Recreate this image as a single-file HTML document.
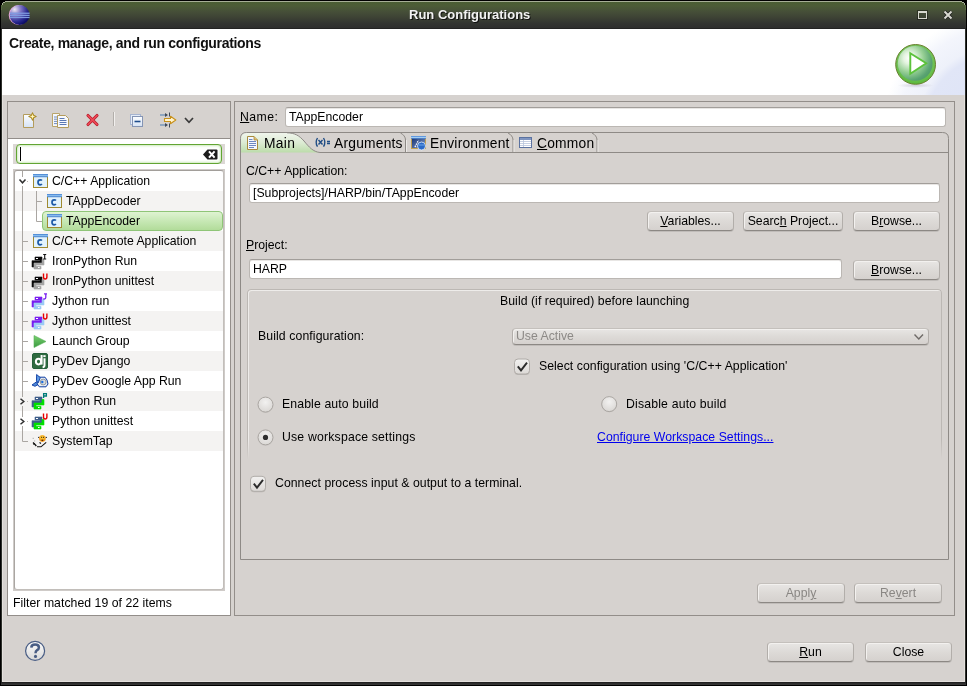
<!DOCTYPE html>
<html><head><meta charset="utf-8">
<style>
*{margin:0;padding:0;box-sizing:border-box}
html,body{width:967px;height:686px;overflow:hidden;background:#000;font-family:"Liberation Sans",sans-serif;font-size:12.25px;color:#000}
.a{position:absolute}
.t{position:absolute;white-space:nowrap;line-height:14px}
svg{position:absolute;overflow:visible}
#title{left:1px;top:1px;width:965px;height:28px;background:linear-gradient(#a6ae96 0px,#a6ae96 1px,#4a5e33 1px,#4c5c37 5px,#454e38 11px,#3c4134 17px,#333531 22px,#2e2e2e 27px,#232323 27px)}
#content{left:2px;top:29px;width:963px;height:653px;background:#d6d2cf;border-left:1px solid #e4e0dd;border-right:1px solid #e4e0dd;border-bottom:1px solid #e4e0dd}
#header{left:2px;top:29px;width:963px;height:66px;background:#fff;overflow:hidden}
#bottom{left:1px;top:682px;width:965px;height:3px;background:linear-gradient(#222 1px,#2e2e2e 1px,#2e2e2e 2px,#353535 2px)}
#sideL{left:1px;top:29px;width:1px;height:653px;background:#2e302b}
#sideR{left:965px;top:29px;width:1px;height:653px;background:#2e302b}
.panel{position:absolute;border:1px solid #938e8a;background:#d6d2cf}
.field{position:absolute;background:#fff;border:1px solid #bbb7b3;border-top-color:#a29e9a;border-radius:3px;box-shadow:inset 0 1px 0 #e8e6e4}
.btn{position:absolute;border:1px solid #b2aeaa;border-top-color:#c4c0bc;border-bottom-color:#8c8884;border-radius:4px;background:linear-gradient(#e8e6e4,#dddad7 50%,#d5d1ce);box-shadow:inset 1px 1px 0 #f3f1ef,0 1px 0 rgba(0,0,0,.10);text-align:center;line-height:18px;height:20px}
.row{position:absolute;left:15px;width:209px;height:20px}
.alt{background:#f3f2f1}
.tl{position:absolute;background:#aaa6a2}
</style></head><body><div id="root" style="position:absolute;left:0;top:0;width:967px;height:686px;will-change:transform">
<div id="title" class="a"></div>
<svg style="left:0;top:0" width="967" height="10" shape-rendering="crispEdges">
<rect x="1" y="1" width="4" height="1" fill="#000"/><rect x="1" y="2" width="2" height="1" fill="#000"/><rect x="1" y="3" width="1" height="2" fill="#000"/>
<rect x="3" y="2" width="2" height="1" fill="#a6ae96"/><rect x="2" y="3" width="1" height="2" fill="#a6ae96"/>
<rect x="962" y="1" width="4" height="1" fill="#000"/><rect x="964" y="2" width="2" height="1" fill="#000"/><rect x="965" y="3" width="1" height="2" fill="#000"/>
<rect x="962" y="2" width="2" height="1" fill="#a6ae96"/><rect x="964" y="3" width="1" height="2" fill="#a6ae96"/>
<rect x="1" y="5" width="1" height="5" fill="#566a41"/><rect x="965" y="5" width="1" height="5" fill="#566a41"/>
</svg>
<div class="t" style="left:410px;top:9px;font-weight:bold;font-size:13px;color:#111;">Run Configurations</div>
<div class="t" style="left:409px;top:8px;font-weight:bold;font-size:13px;color:#f2f2f2;">Run Configurations</div>
<!-- eclipse icon -->
<svg style="left:8px;top:4px" width="23" height="23" viewBox="0 0 23 23">
<defs><radialGradient id="eg" cx="0.25" cy="0.22" r="0.9"><stop offset="0" stop-color="#ece6f4"/><stop offset="0.35" stop-color="#7f76c4"/><stop offset="0.7" stop-color="#2a2a90"/><stop offset="1" stop-color="#02025a"/></radialGradient></defs>
<circle cx="10.7" cy="11" r="10" fill="#e9a9d8"/>
<circle cx="11.6" cy="11" r="9.9" fill="url(#eg)"/>
<rect x="2" y="8.6" width="19.6" height="1.3" fill="#7f9ae0"/>
<rect x="2" y="10.7" width="19.6" height="1.3" fill="#7f9ae0"/>
<rect x="2" y="12.8" width="19.6" height="1.3" fill="#7f9ae0"/>
</svg>
<!-- window buttons -->
<div class="a" style="left:918px;top:11px;width:9px;height:8px;border:1px solid #d8d8d0;border-top-width:2px;box-shadow:0 0 0 1px rgba(0,0,0,.35)"></div>
<svg style="left:942px;top:9px" width="12" height="12" viewBox="0 0 12 12"><path d="M2.5 2.5L9.5 9.5M9.5 2.5L2.5 9.5" stroke="#1e1e1e" stroke-width="3.4"/><path d="M2.5 2.5L9.5 9.5M9.5 2.5L2.5 9.5" stroke="#d8d8d0" stroke-width="2"/></svg>

<div id="content" class="a"></div>
<div id="header" class="a"><div class="a" style="left:0;top:0;width:963px;height:66px;background:radial-gradient(circle 140px at 998px 101px, #dce2f6 0px, #e1e6f7 76px, #eef1fa 84px, #f3f5fc 102px, #fbfcfe 112px, #fff 118px)"></div></div>
<svg style="left:890px;top:40px" width="52" height="52" viewBox="0 0 52 52">
<defs>
<radialGradient id="pr" cx="0.5" cy="0.4" r="0.6"><stop offset="0" stop-color="#8fd080"/><stop offset="0.8" stop-color="#6cc050"/><stop offset="1" stop-color="#58b838"/></radialGradient>
<radialGradient id="pg" cx="0.33" cy="0.35" r="0.75"><stop offset="0" stop-color="#ffffff"/><stop offset="0.22" stop-color="#e4f4e0"/><stop offset="0.55" stop-color="#96cf94"/><stop offset="0.85" stop-color="#5aa472"/><stop offset="1" stop-color="#4f9a68"/></radialGradient>
<radialGradient id="ps" cx="0.5" cy="0.5" r="0.5"><stop offset="0" stop-color="#605070" stop-opacity="0.22"/><stop offset="1" stop-color="#605070" stop-opacity="0"/></radialGradient>
</defs>
<ellipse cx="25.6" cy="45.5" rx="18" ry="2.4" fill="url(#ps)"/>
<circle cx="25.6" cy="24.4" r="19.9" fill="url(#pr)" stroke="#6a7f30" stroke-width="1"/>
<circle cx="25.2" cy="23.4" r="17.4" fill="url(#pg)"/>
<path d="M20.3 13.2 L36.2 23.3 L20.3 33.8 Z" fill="#fff" stroke="#5cc23c" stroke-width="1.9" stroke-linejoin="miter"/>
</svg>
<div class="t" style="left:9px;top:36px;font-weight:bold;font-size:14px;letter-spacing:-0.33px;color:#111">Create, manage, and run configurations</div>
<div id="bottom" class="a"></div><div id="sideL" class="a"></div><div id="sideR" class="a"></div>

<!-- LEFT PANEL -->
<div class="panel" style="left:7px;top:101px;width:224px;height:515px;"></div>
<div class="a" style="left:8px;top:138px;width:222px;height:477px;background:#fff;border-top:1px solid #938e8a"></div>
<svg style="left:0;top:0" width="967" height="686">
<defs>
<linearGradient id="pgw" x1="0" y1="0" x2="0" y2="1"><stop offset="0" stop-color="#fdfeff"/><stop offset="1" stop-color="#d6e3f5"/></linearGradient>
</defs>
<!-- new -->
<path d="M23.5 114.5H30.5L33.5 117.5V127.5H23.5Z" fill="url(#pgw)" stroke="#b49c5c"/>
<path d="M32.5 112.6L33.7 115.3L36.4 116.5L33.7 117.7L32.5 120.4L31.3 117.7L28.6 116.5L31.3 115.3Z" fill="#d8b838" stroke="#9a7818" stroke-width="0.8" stroke-linejoin="round"/>
<path d="M32.5 114.6V118.4M30.6 116.5H34.4" stroke="#fff6c8" stroke-width="0.9"/>
<!-- duplicate -->
<path d="M52.5 113.5H59.5V126.5H52.5Z" fill="#f4f7fc" stroke="#b9a46a"/>
<path d="M57.5 115.5H65.5L68.5 118.5V127.5H57.5Z" fill="#f7f9fd" stroke="#b49c5c"/>
<path d="M54 117H57M54 119.2H57M54 121.4H57M54 123.6H57" stroke="#6f8cc0" stroke-width="1"/>
<path d="M59.5 118.5H64.5M59.5 120.5H66.5M59.5 122.5H66.5M59.5 124.5H66.5" stroke="#5a78b4" stroke-width="1"/>
<!-- delete -->
<path d="M88 115.5L97 124.5M97 115.5L88 124.5" stroke="#b81c2a" stroke-width="3.1" stroke-linecap="round"/>
<path d="M88 115.5L97 124.5M97 115.5L88 124.5" stroke="#ee4a58" stroke-width="1.7" stroke-linecap="round"/>
<!-- separator -->
<path d="M113.5 112V126" stroke="#b2aeaa"/><path d="M114.5 112V126" stroke="#f2f0ee"/>
<!-- collapse -->
<rect x="130.5" y="114.5" width="10" height="10" fill="#e4ecf8" stroke="#a6b4d0"/>
<rect x="132.5" y="116.5" width="10" height="10" fill="url(#pgw)" stroke="#8494b4"/>
<path d="M134.5 121.5H140.5" stroke="#1d4c8c" stroke-width="1.6"/>
<!-- filter -->
<path d="M160 115H166M160 125H166" stroke="#4a7ab0" stroke-width="1"/>
<path d="M165 113L168 115L165 117ZM165 123L168 125L165 127Z" fill="#404a58"/>
<path d="M169.5 112.5V116.5M169.5 123.5V127.5" stroke="#404a58" stroke-width="1"/>
<path d="M164.5 118.5H170.5V116.3L175.8 120L170.5 123.7V121.5H164.5Z" fill="#fff4d0" stroke="#c89018" stroke-width="1.1" stroke-linejoin="round"/>
<!-- chevron -->
<path d="M185 118L189 122.3L193 118" fill="none" stroke="#3a3a3a" stroke-width="1.7"/>
</svg>

<div class="a" style="left:13px;top:144px;width:212px;height:20px;background:#dcd8d5"></div>
<div class="a" style="left:16px;top:144px;width:206px;height:20px;background:#fff;border:1.6px solid #62a533;border-radius:4px;box-shadow:inset 0 0 2.5px 0.5px #b8e0a0"></div>
<div class="a" style="left:20px;top:147px;width:1px;height:14px;background:#000"></div>
<svg style="left:0;top:0" width="967" height="686"><path d="M203 154.5L207.5 149.5H216.5Q217.5 149.5 217.5 150.5V158.5Q217.5 159.5 216.5 159.5H207.5Z" fill="#1c1c1c"/><path d="M209 151.3L214.6 157.7M214.6 151.3L209 157.7" stroke="#fff" stroke-width="2"/></svg>
<div class="a" style="left:13px;top:169px;width:212px;height:422px;background:#cfcbc8"></div>
<div class="a" style="left:14px;top:170px;width:210px;height:420px;background:#fff;border-radius:3px;border:1px solid #c2beba;border-top-color:#a29e9a;border-left-color:#aaa6a2"></div>
<div class="t" style="left:52px;top:174px">C/C++ Application</div>
<div class="a" style="left:15px;top:191px;width:208px;height:20px;background:#f4f3f2"></div>
<div class="t" style="left:66px;top:194px">TAppDecoder</div>
<div class="a" style="left:42px;top:211px;width:181px;height:20px;border:1px solid #8fc578;border-radius:4px;background:linear-gradient(#dff3d2,#c7e8b5 50%,#b2dc9a)"></div>
<div class="t" style="left:66px;top:214px">TAppEncoder</div>
<div class="a" style="left:15px;top:231px;width:208px;height:20px;background:#f4f3f2"></div>
<div class="t" style="left:52px;top:234px">C/C++ Remote Application</div>
<div class="t" style="left:52px;top:254px">IronPython Run</div>
<div class="a" style="left:15px;top:271px;width:208px;height:20px;background:#f4f3f2"></div>
<div class="t" style="left:52px;top:274px">IronPython unittest</div>
<div class="t" style="left:52px;top:294px">Jython run</div>
<div class="a" style="left:15px;top:311px;width:208px;height:20px;background:#f4f3f2"></div>
<div class="t" style="left:52px;top:314px">Jython unittest</div>
<div class="t" style="left:52px;top:334px">Launch Group</div>
<div class="a" style="left:15px;top:351px;width:208px;height:20px;background:#f4f3f2"></div>
<div class="t" style="left:52px;top:354px">PyDev Django</div>
<div class="t" style="left:52px;top:374px">PyDev Google App Run</div>
<div class="a" style="left:15px;top:391px;width:208px;height:20px;background:#f4f3f2"></div>
<div class="t" style="left:52px;top:394px">Python Run</div>
<div class="t" style="left:52px;top:414px">Python unittest</div>
<div class="a" style="left:15px;top:431px;width:208px;height:20px;background:#f4f3f2"></div>
<div class="t" style="left:52px;top:434px">SystemTap</div>
<svg style="left:0;top:0" width="967" height="686">
<defs><linearGradient id="cbar" x1="0" y1="0" x2="0" y2="1"><stop offset="0" stop-color="#3c7acc"/><stop offset="0.5" stop-color="#8cc0f0"/><stop offset="1" stop-color="#3a72c0"/></linearGradient><linearGradient id="lg" x1="0" y1="0" x2="0" y2="1"><stop offset="0" stop-color="#7ad070"/><stop offset="1" stop-color="#3a9a40"/></linearGradient></defs>
<path d="M22.5 171V177M22.5 186V397M22.5 406V417M22.5 426V441.5H28" stroke="#aaa6a2" fill="none"/>
<path d="M23 241.5H28" stroke="#aaa6a2"/>
<path d="M23 261.5H28" stroke="#aaa6a2"/>
<path d="M23 281.5H28" stroke="#aaa6a2"/>
<path d="M23 301.5H28" stroke="#aaa6a2"/>
<path d="M23 321.5H28" stroke="#aaa6a2"/>
<path d="M23 341.5H28" stroke="#aaa6a2"/>
<path d="M23 361.5H28" stroke="#aaa6a2"/>
<path d="M23 381.5H28" stroke="#aaa6a2"/>
<path d="M36.5 191V221.5H42M37 201.5H42" stroke="#aaa6a2" fill="none"/>
<rect x="27" y="181.0" width="1" height="1" fill="#b8b4b0"/>
<rect x="27" y="401.0" width="1" height="1" fill="#b8b4b0"/>
<rect x="27" y="421.0" width="1" height="1" fill="#b8b4b0"/>
<path d="M19.5 179.5L22.5 182.8L25.5 179.5" fill="none" stroke="#303030" stroke-width="1.5"/>
<path d="M20.5 398.7L23.8 401.5L20.5 404.3" fill="none" stroke="#303030" stroke-width="1.5"/>
<path d="M20.5 418.7L23.8 421.5L20.5 424.3" fill="none" stroke="#303030" stroke-width="1.5"/>
<g transform="translate(33,174)"><rect x="0.5" y="0.5" width="14" height="13" fill="#e2f3fd" stroke="#a08a30"/><rect x="0" y="0" width="15" height="3.2" fill="url(#cbar)"/><path d="M8.9 6.6Q8.4 5.9 7.2 5.9Q5 5.9 5 8.3Q5 10.8 7.2 10.8Q8.4 10.8 8.9 10.1" fill="none" stroke="#1d5aa6" stroke-width="1.7"/></g>
<g transform="translate(47,194)"><rect x="0.5" y="0.5" width="14" height="13" fill="#e2f3fd" stroke="#a08a30"/><rect x="0" y="0" width="15" height="3.2" fill="url(#cbar)"/><path d="M8.9 6.6Q8.4 5.9 7.2 5.9Q5 5.9 5 8.3Q5 10.8 7.2 10.8Q8.4 10.8 8.9 10.1" fill="none" stroke="#1d5aa6" stroke-width="1.7"/></g>
<g transform="translate(47,214)"><rect x="0.5" y="0.5" width="14" height="13" fill="#e2f3fd" stroke="#a08a30"/><rect x="0" y="0" width="15" height="3.2" fill="url(#cbar)"/><path d="M8.9 6.6Q8.4 5.9 7.2 5.9Q5 5.9 5 8.3Q5 10.8 7.2 10.8Q8.4 10.8 8.9 10.1" fill="none" stroke="#1d5aa6" stroke-width="1.7"/></g>
<g transform="translate(33,234)"><rect x="0.5" y="0.5" width="14" height="13" fill="#e2f3fd" stroke="#a08a30"/><rect x="0" y="0" width="15" height="3.2" fill="url(#cbar)"/><path d="M8.9 6.6Q8.4 5.9 7.2 5.9Q5 5.9 5 8.3Q5 10.8 7.2 10.8Q8.4 10.8 8.9 10.1" fill="none" stroke="#1d5aa6" stroke-width="1.7"/></g>
<g transform="translate(31,251)"><path d="M4 6H11V12.4H3V16H1V9.7H9V9H4Z" fill="#0a0a0a" stroke="#0a0a0a" stroke-width="0.6" stroke-linejoin="round"/><rect x="5" y="7" width="2" height="1" fill="#fff"/><path d="M11 8.5H13V14H5V15.3H10V18H3V12H11Z" fill="#a4a4a4" stroke="#a4a4a4" stroke-width="0.6" stroke-linejoin="round"/><rect x="7" y="16" width="1.6" height="1" fill="#fff"/><path d="M12.2 3.5H15.2M13.7 3.5V8M12.2 8H15.2" stroke="#111" stroke-width="1.1"/></g>
<g transform="translate(31,271)"><path d="M4 6H11V12.4H3V16H1V9.7H9V9H4Z" fill="#0a0a0a" stroke="#0a0a0a" stroke-width="0.6" stroke-linejoin="round"/><rect x="5" y="7" width="2" height="1" fill="#fff"/><path d="M11 8.5H13V14H5V15.3H10V18H3V12H11Z" fill="#a4a4a4" stroke="#a4a4a4" stroke-width="0.6" stroke-linejoin="round"/><rect x="7" y="16" width="1.6" height="1" fill="#fff"/><path d="M12.5 2.5V6Q12.5 8 14.2 8Q15.9 8 15.9 6V2.5" fill="none" stroke="#e80000" stroke-width="1.4"/></g>
<g transform="translate(31,291)"><path d="M4 6H11V12.4H3V16H1V9.7H9V9H4Z" fill="#7a20f0" stroke="#7a20f0" stroke-width="0.6" stroke-linejoin="round"/><rect x="5" y="7" width="2" height="1" fill="#fff"/><path d="M11 8.5H13V14H5V15.3H10V18H3V12H11Z" fill="#9ccaf6" stroke="#9ccaf6" stroke-width="0.6" stroke-linejoin="round"/><rect x="7" y="16" width="1.6" height="1" fill="#fff"/><path d="M13 2.8H16M14.8 2.8V6.5Q14.8 8 13.3 8H12.3" fill="none" stroke="#7a20f0" stroke-width="1.3"/></g>
<g transform="translate(31,311)"><path d="M4 6H11V12.4H3V16H1V9.7H9V9H4Z" fill="#7a20f0" stroke="#7a20f0" stroke-width="0.6" stroke-linejoin="round"/><rect x="5" y="7" width="2" height="1" fill="#fff"/><path d="M11 8.5H13V14H5V15.3H10V18H3V12H11Z" fill="#9ccaf6" stroke="#9ccaf6" stroke-width="0.6" stroke-linejoin="round"/><rect x="7" y="16" width="1.6" height="1" fill="#fff"/><path d="M12.5 2.5V6Q12.5 8 14.2 8Q15.9 8 15.9 6V2.5" fill="none" stroke="#e80000" stroke-width="1.4"/></g>
<g transform="translate(31,391)"><path d="M4 6H11V12.4H3V16H1V9.7H9V9H4Z" fill="#3f5f8a" stroke="#3f5f8a" stroke-width="0.6" stroke-linejoin="round"/><rect x="5" y="7" width="2" height="1" fill="#fff"/><path d="M11 8.5H13V14H5V15.3H10V18H3V12H11Z" fill="#00e000" stroke="#00e000" stroke-width="0.6" stroke-linejoin="round"/><rect x="7" y="16" width="1.6" height="1" fill="#fff"/><path d="M12.6 7V2.6H15.4V5H12.6" fill="none" stroke="#007a78" stroke-width="1.3"/></g>
<g transform="translate(31,411)"><path d="M4 6H11V12.4H3V16H1V9.7H9V9H4Z" fill="#3f5f8a" stroke="#3f5f8a" stroke-width="0.6" stroke-linejoin="round"/><rect x="5" y="7" width="2" height="1" fill="#fff"/><path d="M11 8.5H13V14H5V15.3H10V18H3V12H11Z" fill="#00e000" stroke="#00e000" stroke-width="0.6" stroke-linejoin="round"/><rect x="7" y="16" width="1.6" height="1" fill="#fff"/><path d="M12.5 2.5V6Q12.5 8 14.2 8Q15.9 8 15.9 6V2.5" fill="none" stroke="#e80000" stroke-width="1.4"/></g>
<path d="M34 335.5L46 341.5L34 347.5Z" fill="url(#lg)" stroke="#58b058" stroke-width="0.6"/>
<rect x="32.5" y="353.5" width="15" height="15" rx="1.5" fill="#2f6b40" stroke="#24603a"/>
<ellipse cx="38.5" cy="361.6" rx="2.6" ry="2.8" fill="none" stroke="#fff" stroke-width="2"/><path d="M41.6 355V364.6" stroke="#fff" stroke-width="2"/><rect x="43.3" y="355.2" width="2.3" height="1.9" fill="#fff"/><path d="M44.5 358.2V365.2Q44.5 367 42.6 367.2" fill="none" stroke="#fff" stroke-width="2"/>
<!-- gae -->
<path d="M32 385L36.5 381.8L40 383.5L35 386.3Z" fill="#4f8ad8" stroke="#0b3aa0" stroke-width="0.9" stroke-linejoin="round"/>
<path d="M37.2 377.2H45L47 380L48 384L46 386.8H39.3L37.2 384Z" fill="#eaf0f6" stroke="#0b3aa0" stroke-width="1" stroke-linejoin="round"/>
<path d="M36.6 374.5L40.3 377.6L38.2 382.8L36.5 380.8Z" fill="#5d9ae4" stroke="#0b3aa0" stroke-width="0.9" stroke-linejoin="round"/>
<circle cx="43.2" cy="382" r="2.9" fill="#d6dade" stroke="#8c9298" stroke-width="0.9"/>
<circle cx="42.3" cy="382" r="1.2" fill="#1a6ee0"/>
<!-- systemtap -->
<path d="M33 442.5L35.5 445L36.3 446" stroke="#111" stroke-width="1.3" fill="none"/>
<path d="M33.2 444.3L35 443.5" stroke="#111" stroke-width="1"/>
<path d="M37 446.8H41L46.2 442.3M39.5 442.5L41 443.5" stroke="#111" stroke-width="1.1" fill="none"/>
<path d="M33.2 437.8V439M34.2 441h1" stroke="#a0a0a0" stroke-width="0.9"/>
<path d="M38 437.4H39.5M45.5 437.4H47" stroke="#202838" stroke-width="1"/>
<circle cx="42.4" cy="438.6" r="3.3" fill="#f29a18"/>
<circle cx="42.3" cy="437.6" r="2.4" fill="#fbc030"/>
<path d="M41.2 437.3h0.9M43.1 437.3h0.9" stroke="#111" stroke-width="1"/>
<path d="M41.5 439.6h1.8v1.4h-1.8z" fill="#5a2000"/>


</svg>
<div class="t" style="letter-spacing:0.036px;left:13px;top:596px;">Filter matched 19 of 22 items</div>

<!-- RIGHT PANEL -->
<div class="panel" style="left:234px;top:101px;width:721px;height:515px;"></div>
<div class="t" style="left:240px;top:110px;letter-spacing:0.45px"><u>N</u>ame:</div>
<div class="field" style="left:285px;top:107px;width:661px;height:20px;"></div>
<div class="t" style="left:289px;top:110px;">TAppEncoder</div>

<!-- tab folder -->
<svg style="left:0;top:0" width="967" height="686">
<defs>
<linearGradient id="tg" x1="0" y1="0" x2="0" y2="1"><stop offset="0" stop-color="#f0f5ec"/><stop offset="0.5" stop-color="#dcebd3"/><stop offset="1" stop-color="#bcdcaa"/></linearGradient>
<linearGradient id="envbar" x1="0" y1="0" x2="0" y2="1"><stop offset="0" stop-color="#3a78d0"/><stop offset="0.5" stop-color="#a8d4f8"/><stop offset="1" stop-color="#3a70c0"/></linearGradient>
<linearGradient id="envbody" x1="0" y1="0" x2="1" y2="1"><stop offset="0" stop-color="#0a2a70"/><stop offset="1" stop-color="#8aa0c8"/></linearGradient>
</defs>
<path d="M240.5 559.5V138.5Q240.5 132.5 246.5 132.5H942.5Q948.5 132.5 948.5 138.5V559.5Z" fill="none" stroke="#8e8a86"/>
<path d="M241 152.5V139Q241 133 247 133H287C295 133 299 135.5 304 141C309 147 313 151.8 320 152.5H241Z" fill="url(#tg)"/>
<path d="M287 132.8C295 133 299 135.5 304 141C309 147 313 151.8 320 152.5H948" fill="none" stroke="#8e8a86"/>
<path d="M400.5 133C403.5 134.5 405.5 137 405.5 140V152" fill="none" stroke="#8e8a86"/>
<path d="M406.5 140V152" stroke="#eceae8"/>
<path d="M508 133C511 134.5 513 137 513 140V152" fill="none" stroke="#8e8a86"/>
<path d="M514 140V152" stroke="#eceae8"/>
<path d="M592 133C595 134.5 597 137 597 140V152" fill="none" stroke="#8e8a86"/>
<path d="M598 140V152" stroke="#eceae8"/>
<!-- main icon -->
<path d="M247.5 136.5H254L257.5 140V149.5H247.5Z" fill="#f4f7fd" stroke="#a88a3c"/>
<path d="M254 136.5V140H257.5" fill="#e0c070" stroke="#a88a3c" stroke-width="0.8"/>
<path d="M249 139.5H252.5M249 141.5H256M249 143.5H256M249 145.5H256M249 147.5H254" stroke="#6d88c0" stroke-width="1"/>
<!-- args icon -->
<g fill="none" stroke="#1f4c84" stroke-width="1.4">
<path d="M317.5 138Q314.8 142.3 317.5 146.6"/>
<path d="M323.5 138Q326.2 142.3 323.5 146.6"/>
<path d="M318.5 140L322.5 144.5M322.5 140L318.5 144.5"/>
<path d="M327 141.5H330M327 143.5H330"/>
</g>
<!-- env icon -->
<rect x="411.5" y="136.5" width="14" height="12" fill="url(#envbody)" stroke="#c0a050"/>
<rect x="411" y="136" width="15" height="2.8" fill="url(#envbar)"/>
<path d="M415 147L418.5 140" stroke="#fff" stroke-width="1.3" stroke-dasharray="1.5 1"/>
<circle cx="421.5" cy="146" r="4" fill="#2a6ac8" stroke="#e8f0fa" stroke-width="0.8"/>
<path d="M418.5 145H424.5" stroke="#6aa4e8" stroke-width="1"/>
<!-- common icon -->
<rect x="519.5" y="137.5" width="12" height="10" fill="#fff" stroke="#5b72a0"/>
<rect x="520" y="138" width="11" height="2" fill="#7f95c0"/>
<path d="M520 141.5H531M520 143.5H531M520 145.5H531" stroke="#b8c4dc" stroke-width="0.8"/>
<path d="M523.5 140V147" stroke="#b8c4dc" stroke-width="0.8"/>
</svg>
<div class="t" style="letter-spacing:0.3px;left:264px;top:137px;font-size:13.8px">Main</div>
<div class="t" style="letter-spacing:0.22px;left:334px;top:137px;font-size:13.8px">Arguments</div>
<div class="t" style="letter-spacing:0.2px;left:430px;top:137px;font-size:13.8px">Environment</div>
<div class="t" style="letter-spacing:0.22px;left:537px;top:137px;font-size:13.8px"><u>C</u>ommon</div>

<!--TABS-->


<div class="t" style="left:246px;top:164px;">C/C++ Application:</div>
<div class="field" style="left:249px;top:183px;width:691px;height:20px;"></div>
<div class="t" style="left:253px;top:186px;">[Subprojects]/HARP/bin/TAppEncoder</div>

<div class="btn" style="left:647px;top:211px;width:87px;"><u>V</u>ariables...</div>
<div class="btn" style="left:743px;top:211px;width:100px;">Searc<u>h</u> Project...</div>
<div class="btn" style="left:853px;top:211px;width:87px;">B<u>r</u>owse...</div>

<div class="t" style="left:246px;top:238px;"><u>P</u>roject:</div>
<div class="field" style="left:249px;top:259px;width:593px;height:20px;"></div>
<div class="t" style="left:253px;top:262px;">HARP</div>
<div class="btn" style="left:853px;top:260px;width:87px;"><u>B</u>rowse...</div>

<!-- group -->
<div class="a" style="left:247px;top:289px;width:695px;height:170px;border:1px solid #bcb8b4;border-bottom:none;border-radius:4px 4px 0 0;box-shadow:inset 1px 1px 0 #eeecea;-webkit-mask-image:linear-gradient(#000 150px,transparent 170px)"></div>
<div class="t" style="letter-spacing:0.057px;left:500px;top:294px;">Build (if required) before launching</div>
<div class="t" style="letter-spacing:0.105px;left:258px;top:329px;">Build configuration:</div>
<div class="a" style="left:512px;top:328px;width:417px;height:17px;border:1px solid #b2aeaa;border-top-color:#c4c0bc;border-bottom-color:#8c8884;border-radius:4px;background:linear-gradient(#e8e6e4,#dddad7 50%,#d5d1ce);box-shadow:inset 1px 1px 0 #f3f1ef,0 1px 0 rgba(0,0,0,.10)"></div>
<div class="t" style="left:516px;top:329px;color:#8d8a87">Use Active</div>
<svg style="left:0;top:0" width="967" height="686"><path d="M914.5 334.5L918.8 339L923 334.5" fill="none" stroke="#6f6b68" stroke-width="1.4"/></svg>
<div class="t" style="letter-spacing:0.044px;left:539px;top:359px;">Select configuration using 'C/C++ Application'</div>
<div class="t" style="letter-spacing:0.125px;left:282px;top:397px;">Enable auto build</div>
<div class="t" style="letter-spacing:0.190px;left:282px;top:430px;">Use workspace settings</div>
<div class="t" style="letter-spacing:0.176px;left:626px;top:397px;">Disable auto build</div>
<div class="t" style="letter-spacing:0.033px;left:597px;top:430px;color:#0000ee;text-decoration:underline">Configure Workspace Settings...</div>
<svg style="left:0;top:0" width="967" height="686">
<defs>
<linearGradient id="cbg" x1="0" y1="0" x2="0" y2="1"><stop offset="0" stop-color="#f2f1f0"/><stop offset="1" stop-color="#dcd9d6"/></linearGradient>
<radialGradient id="rbg" cx="0.5" cy="0.35" r="0.7"><stop offset="0" stop-color="#f2f1f0"/><stop offset="1" stop-color="#d8d5d2"/></radialGradient>
</defs>
<rect x="514.5" y="360" width="15" height="15" rx="3.5" fill="#8a8682" opacity="0.35"/>
<rect x="514.5" y="359" width="15" height="15" rx="3.5" fill="url(#cbg)" stroke="#b0aca8"/>
<path d="M517.8 366.3L521 370.4L527 362.6" fill="none" stroke="#2b2b2b" stroke-width="1.9"/>
<rect x="250.5" y="477.3" width="15" height="15" rx="3.5" fill="#8a8682" opacity="0.35"/>
<rect x="250.5" y="476.3" width="15" height="15" rx="3.5" fill="url(#cbg)" stroke="#b0aca8"/>
<path d="M253.8 483.6L257 487.7L263 479.9" fill="none" stroke="#2b2b2b" stroke-width="1.9"/>
<circle cx="265.5" cy="405.3" r="7.5" fill="#bdb9b5" opacity="0.6"/>
<circle cx="265.5" cy="404.6" r="7.5" fill="url(#rbg)" stroke="#aaa6a2"/>
<circle cx="265.5" cy="438.1" r="7.5" fill="#bdb9b5" opacity="0.6"/>
<circle cx="265.5" cy="437.4" r="7.5" fill="url(#rbg)" stroke="#aaa6a2"/>
<circle cx="265.5" cy="437.4" r="2.6" fill="#2e2e2e"/>
<circle cx="609.2" cy="404.8" r="7.5" fill="#bdb9b5" opacity="0.6"/>
<circle cx="609.2" cy="404.1" r="7.5" fill="url(#rbg)" stroke="#aaa6a2"/>
</svg>
<div class="t" style="letter-spacing:0.045px;left:275px;top:476px;">Connect process input &amp; output to a terminal.</div>

<div class="btn" style="left:757px;top:583px;width:88px;color:#8a8784">Appl<u>y</u></div>
<div class="btn" style="left:854px;top:583px;width:88px;color:#8a8784">Re<u>v</u>ert</div>

<!-- help -->
<svg style="left:0;top:0" width="967" height="686">
<defs><linearGradient id="hg" x1="0" y1="0" x2="0" y2="1"><stop offset="0" stop-color="#fbfbfb"/><stop offset="1" stop-color="#d8d8d8"/></linearGradient></defs>
<circle cx="35.1" cy="650.9" r="9.5" fill="url(#hg)" stroke="#495d84" stroke-width="1.2"/>
<path d="M31.3 647.6Q31.5 644.6 35.1 644.6Q38.9 644.6 38.9 647.5Q38.9 649.2 37.1 650.2Q35.5 651.1 35.5 653.2" fill="none" stroke="#495d84" stroke-width="2.5"/>
<circle cx="35.5" cy="656.4" r="1.55" fill="#495d84"/>
</svg>
<div class="btn" style="left:767px;top:642px;width:87px;"><u>R</u>un</div>
<div class="btn" style="left:865px;top:642px;width:87px;">Close</div>
</div></body></html>
